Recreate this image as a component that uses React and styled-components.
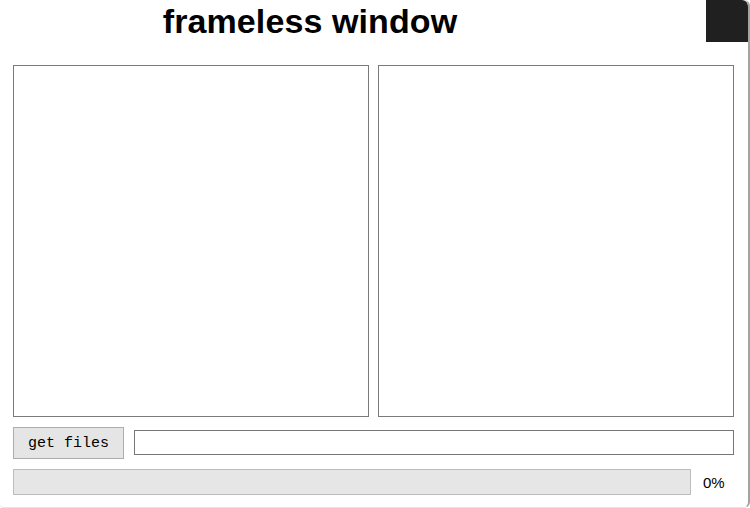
import React from "react";
import styled, { createGlobalStyle } from "styled-components";

const GlobalStyle = createGlobalStyle`
  html, body {
    margin: 0;
    padding: 0;
    background: #ffffff;
  }
  body {
    font-family: "Liberation Sans", Arial, sans-serif;
  }
`;

const Window = styled.div`
  box-sizing: border-box;
  width: 750px;
  height: 508px;
  background: #fff;
  border-right: 2px solid #a3a3a3;
  border-bottom: 1px solid #e4e4e4;
  border-radius: 0 6px 6px 4px;
  display: flex;
  flex-direction: column;
  overflow: hidden;
`;

const TitleBar = styled.header`
  display: flex;
  height: 42px;
`;

const Title = styled.h1`
  flex: 1;
  margin: 0;
  padding: 3px 86px 0 0;
  text-align: center;
  font-size: 34px;
  font-weight: 700;
  letter-spacing: 0.1px;
  line-height: 36px;
  color: #000;
`;

const Control = styled.div`
  width: 42px;
  height: 42px;
  background: #202020;
  border-top-right-radius: 6px;
`;

const Body = styled.main`
  display: flex;
  flex-direction: column;
  padding: 23px 14px 0 13px;
`;

const Panels = styled.div`
  display: grid;
  grid-template-columns: 356px 356px;
  column-gap: 9px;
`;

const Panel = styled.div`
  box-sizing: border-box;
  height: 352px;
  border: 1px solid #7a7a7a;
`;

const FileRow = styled.div`
  display: flex;
  align-items: flex-start;
  gap: 10px;
  margin-top: 10px;
`;

const Button = styled.button`
  box-sizing: border-box;
  width: 111px;
  height: 32px;
  margin: 0;
  padding: 0;
  background: #e5e5e5;
  border: 1px solid #adadad;
  font-family: "Liberation Mono", "Courier New", monospace;
  font-size: 15px;
  color: #000;
`;

const PathInput = styled.input`
  box-sizing: border-box;
  flex: 1;
  height: 25px;
  margin: 3px 0 0;
  border: 1px solid #767676;
  padding: 0 4px;
`;

const ProgressRow = styled.div`
  display: flex;
  align-items: center;
  margin-top: 10px;
`;

const Track = styled.div`
  box-sizing: border-box;
  width: 678px;
  height: 26px;
  background: #e6e6e6;
  border: 1px solid #bcbcbc;
`;

const Fill = styled.div`
  height: 100%;
  background: #06b025;
`;

const Percent = styled.span`
  margin-left: 12px;
  font-family: "Liberation Sans", Arial, sans-serif;
  font-size: 15px;
  color: #000;
`;

export default function App() {
  const progress = 0;
  return (
    <>
      <GlobalStyle />
      <Window>
        <TitleBar>
          <Title>frameless window</Title>
          <Control />
        </TitleBar>
        <Body>
          <Panels>
            <Panel />
            <Panel />
          </Panels>
          <FileRow>
            <Button>get files</Button>
            <PathInput type="text" />
          </FileRow>
          <ProgressRow>
            <Track>
              <Fill style={{ width: `${progress}%` }} />
            </Track>
            <Percent>{progress}%</Percent>
          </ProgressRow>
        </Body>
      </Window>
    </>
  );
}
